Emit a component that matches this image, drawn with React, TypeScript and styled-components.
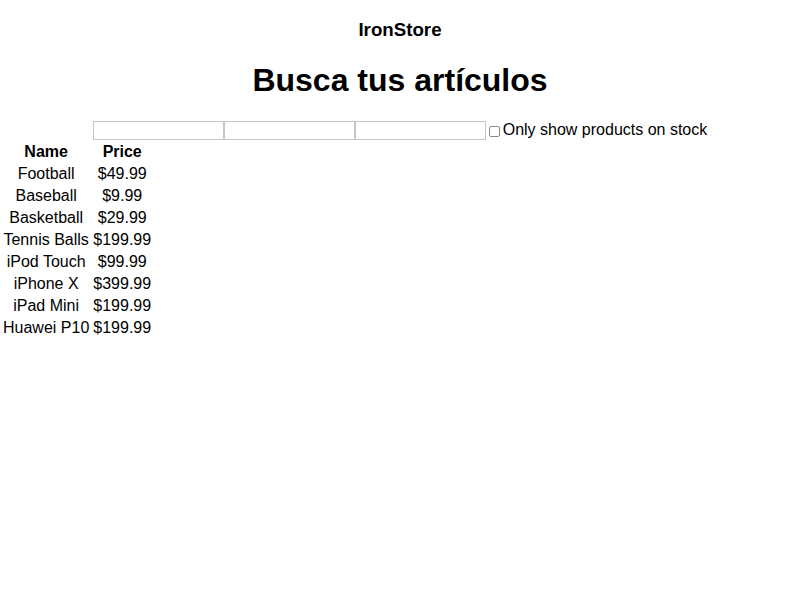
import React from "react";
import styled, { createGlobalStyle } from "styled-components";

const Global = createGlobalStyle`
  html, body { margin: 0; padding: 0; background: #fff; }
  body { font-family: "Liberation Sans", Arial, sans-serif; font-size: 16px; color: #000; }
`;

const Page = styled.div`
  text-align: center;
`;

const Brand = styled.h3`
  font-size: 18.72px;
  font-weight: bold;
  margin: 18.72px 0 0;
  line-height: normal;
`;

const Title = styled.h1`
  font-size: 32px;
  font-weight: bold;
  margin: 21.44px 0 21.44px;
  line-height: normal;
`;

const SearchRow = styled.div`
  display: flex;
  justify-content: center;
  align-items: center;
  height: 19px;
`;

const SearchInput = styled.input`
  box-sizing: border-box;
  width: 131px;
  height: 19px;
  margin: 0;
  padding: 1px 2px;
  border: 1px solid #c6c6c6;
  background: #fff;
  font-family: "Liberation Sans", Arial, sans-serif;
  font-size: 13px;
  outline: none;
`;

const Check = styled.input`
  width: 11px;
  height: 11px;
  margin: 2px 3px 0 3px;
  appearance: none;
  border: 1px solid #8a8a8a;
  border-radius: 2px;
  background: #fff;
`;

const Label = styled.label`
  font-size: 16px;
  line-height: 19px;
  padding-bottom: 2px;
`;

const Table = styled.table`
  border-spacing: 2px;
  font-size: 16px;
`;

const Th = styled.th`
  padding: 1px;
  font-weight: bold;
  text-align: center;
`;

const Td = styled.td`
  padding: 1px;
  text-align: center;
`;

const products = [
  { name: "Football", price: "$49.99" },
  { name: "Baseball", price: "$9.99" },
  { name: "Basketball", price: "$29.99" },
  { name: "Tennis Balls", price: "$199.99" },
  { name: "iPod Touch", price: "$99.99" },
  { name: "iPhone X", price: "$399.99" },
  { name: "iPad Mini", price: "$199.99" },
  { name: "Huawei P10", price: "$199.99" },
];

export default function App() {
  return (
    <Page>
      <Global />
      <Brand>IronStore</Brand>
      <Title>Busca tus artículos</Title>
      <SearchRow>
        <SearchInput type="text" />
        <SearchInput type="text" />
        <SearchInput type="text" />
        <Check type="checkbox" id="stock" />
        <Label htmlFor="stock">Only show products on stock</Label>
      </SearchRow>
      <Table>
        <thead>
          <tr>
            <Th>Name</Th>
            <Th>Price</Th>
          </tr>
        </thead>
        <tbody>
          {products.map((p) => (
            <tr key={p.name}>
              <Td>{p.name}</Td>
              <Td>{p.price}</Td>
            </tr>
          ))}
        </tbody>
      </Table>
    </Page>
  );
}
